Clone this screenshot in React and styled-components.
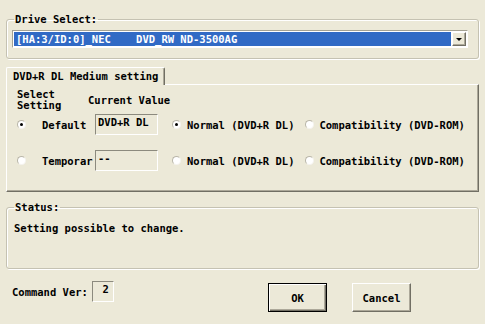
import styled, { createGlobalStyle } from 'styled-components';

const GlobalStyle = createGlobalStyle`
  html, body {
    margin: 0;
    background: #ece9d8;
  }
  body {
    font-family: "DejaVu Sans Mono", "Liberation Mono", monospace;
    font-weight: bold;
    font-size: 10.5px;
    color: #000;
  }
`;

const Dialog = styled.div`
  width: 485px;
  height: 324px;
  box-sizing: border-box;
  padding: 13px 6px 0;
  overflow: hidden;
  background: #ece9d8;
`;

const Group = styled.fieldset`
  margin: ${p => p.$top || 0}px 0 0;
  padding: ${p => p.$pad};
  border: 1px solid #c5c2b2;
  border-radius: 3px;
  box-shadow: 1px 1px 0 #fff, inset 1px 1px 0 #fff;
  min-width: 0;

  legend {
    padding: 0 1px;
    margin-left: ${p => p.$legendShift || 0}px;
    line-height: 12px;
  }
`;

const Combo = styled.div`
  display: flex;
  height: 18px;
  box-sizing: border-box;
  border: 1px solid;
  border-color: #a5a293 #fff #fff #a5a293;
  background: #fff;
  padding: 1px;
`;

const ComboValue = styled.div`
  flex: 1;
  background: #316ac5;
  color: #fff;
  white-space: pre;
  line-height: 14px;
  padding-left: 2px;
  margin-right: 1px;
`;

const DropButton = styled.div`
  width: 14px;
  box-sizing: border-box;
  background: #ece9d8;
  border: 1px solid;
  border-color: #fff #716f64 #716f64 #fff;
  box-shadow: inset -1px -1px 0 #aca899;
  display: flex;
  align-items: center;
  justify-content: center;

  &::after {
    content: '';
    border-left: 3px solid transparent;
    border-right: 3px solid transparent;
    border-top: 3px solid #000;
  }
`;

const TabRow = styled.div`
  display: flex;
  margin-top: 8px;
`;

const Tab = styled.div`
  position: relative;
  z-index: 1;
  height: 18px;
  margin-bottom: -1px;
  box-sizing: border-box;
  padding: 2px 6px 0;
  line-height: 12px;
  background: #ece9d8;
  border-top: 1px solid #fff;
  border-left: 1px solid #fff;
  border-right: 1px solid #716f64;
  border-radius: 2px 2px 0 0;
  box-shadow: inset -1px 0 0 #aca899;
`;

const TabPanel = styled.div`
  border: 1px solid;
  border-color: #fff #716f64 #716f64 #fff;
  box-shadow: inset -1px -1px 0 #aca899;
  padding: 4px 10px 20px;
`;

const HeaderRow = styled.div`
  display: flex;
  align-items: center;
  line-height: 11px;
`;

const HeadCell = styled.div`
  width: ${p => p.$w ? `${p.$w}px` : 'auto'};
`;

const SettingRow = styled.div`
  display: flex;
  align-items: center;
  height: 21px;
  margin-top: ${p => p.$top}px;
`;

const RadioMark = styled.span`
  display: inline-block;
  flex: none;
  width: 9px;
  height: 9px;
  box-sizing: border-box;
  border-radius: 50%;
  border: 1px solid;
  border-color: #b9b6a8 #f4f3ee #f4f3ee #b9b6a8;
  background: #fff;
  position: relative;

  &::after {
    content: '';
    display: ${p => (p.$checked ? 'block' : 'none')};
    position: absolute;
    left: 2px;
    top: 2px;
    width: 3px;
    height: 3px;
    border-radius: 50%;
    background: #000;
  }
`;

const RadioCell = styled.div`
  width: 25px;
  display: flex;
  align-items: center;
`;

const RowLabel = styled.div`
  width: 53px;
`;

const ValueBox = styled.div`
  width: ${p => p.$w}px;
  height: 21px;
  box-sizing: border-box;
  border: 1px solid;
  border-color: #8c8a7e #fff #fff #8c8a7e;
  padding: 1px ${p => p.$right ? '4px' : '0'} 0 ${p => p.$right ? '0' : '2px'};
  line-height: 12px;
  text-align: ${p => (p.$right ? 'right' : 'left')};
`;

const Option = styled.label`
  display: flex;
  align-items: center;
  gap: ${p => p.$gap}px;
  margin-left: ${p => p.$left}px;
`;

const StatusText = styled.div`
  line-height: 12px;
`;

const BottomRow = styled.div`
  display: flex;
  align-items: flex-start;
  margin-top: 12px;
  padding: 0 68px 0 6px;
`;

const CommandVer = styled.div`
  display: flex;
  align-items: center;
  gap: 4px;
  height: 21px;
`;

const Buttons = styled.div`
  display: flex;
  gap: 25px;
  margin-left: auto;
  margin-top: 2px;
`;

const Button = styled.button`
  width: 59px;
  height: 29px;
  box-sizing: border-box;
  font: inherit;
  color: #000;
  background: #ece9d8;
  padding: 0;
  border: 1px solid;
  border-color: ${p => (p.$default ? '#000' : '#fff #716f64 #716f64 #fff')};
  box-shadow: ${p =>
    p.$default
      ? 'inset 1px 1px 0 #fff, inset -1px -1px 0 #716f64, inset -2px -2px 0 #aca899'
      : 'inset -1px -1px 0 #aca899'};
`;

export default function App() {
  return (
    <>
      <GlobalStyle />
      <Dialog>
        <Group $pad="5px 10px 10px 5px" $legendShift={2}>
          <legend>Drive Select:</legend>
          <Combo>
            <ComboValue>{'[HA:3/ID:0]_NEC    DVD_RW ND-3500AG'}</ComboValue>
            <DropButton />
          </Combo>
        </Group>

        <TabRow>
          <Tab>DVD+R DL Medium setting</Tab>
        </TabRow>
        <TabPanel>
          <HeaderRow>
            <HeadCell $w={71}>Select<br />Setting</HeadCell>
            <HeadCell>Current Value</HeadCell>
          </HeaderRow>

          <SettingRow $top={3}>
            <RadioCell><RadioMark $checked /></RadioCell>
            <RowLabel>Default</RowLabel>
            <ValueBox $w={63}>DVD+R DL</ValueBox>
            <Option $left={14} $gap={6}>
              <RadioMark $checked />Normal (DVD+R DL)
            </Option>
            <Option $left={11} $gap={5}>
              <RadioMark />Compatibility (DVD-ROM)
            </Option>
          </SettingRow>

          <SettingRow $top={15}>
            <RadioCell><RadioMark /></RadioCell>
            <RowLabel>Temporar</RowLabel>
            <ValueBox $w={63}>--</ValueBox>
            <Option $left={14} $gap={6}>
              <RadioMark />Normal (DVD+R DL)
            </Option>
            <Option $left={11} $gap={5}>
              <RadioMark />Compatibility (DVD-ROM)
            </Option>
          </SettingRow>
        </TabPanel>

        <Group $top={9} $pad="9px 7px 34px 7px">
          <legend>Status:</legend>
          <StatusText>Setting possible to change.</StatusText>
        </Group>

        <BottomRow>
          <CommandVer>
            Command Ver:
            <ValueBox $w={22} $right>2</ValueBox>
          </CommandVer>
          <Buttons>
            <Button $default>OK</Button>
            <Button>Cancel</Button>
          </Buttons>
        </BottomRow>
      </Dialog>
    </>
  );
}
